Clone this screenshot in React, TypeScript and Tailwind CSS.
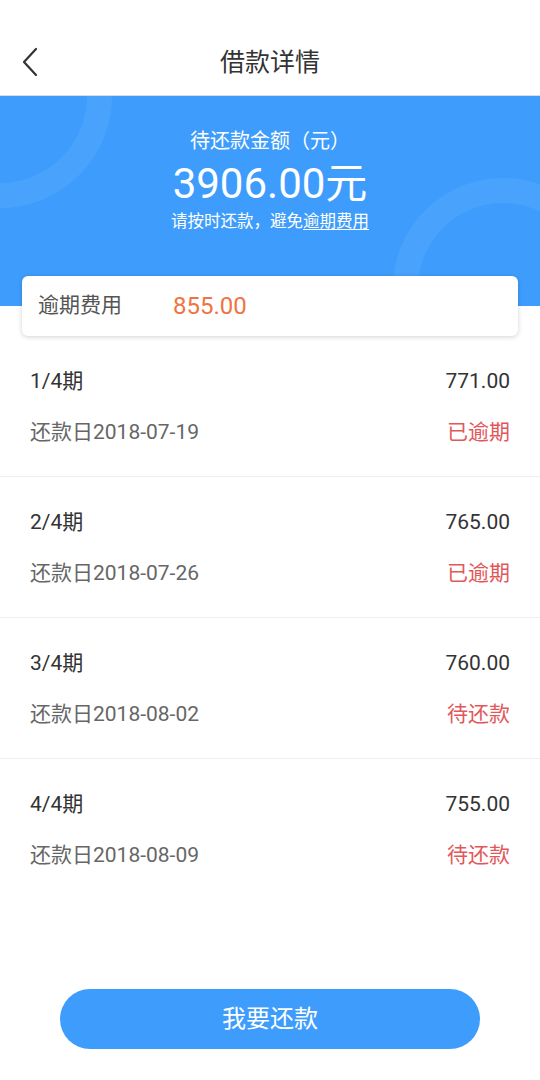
import React from 'react'

const periods = [
  { label: '1/4期', amount: '771.00', date: '还款日2018-07-19', status: '已逾期' },
  { label: '2/4期', amount: '765.00', date: '还款日2018-07-26', status: '已逾期' },
  { label: '3/4期', amount: '760.00', date: '还款日2018-08-02', status: '待还款' },
  { label: '4/4期', amount: '755.00', date: '还款日2018-08-09', status: '待还款' },
]

export default function App() {
  return (
    <div className="flex min-h-[1080px] w-[540px] flex-col bg-white font-['Roboto','Noto_Sans_CJK_SC',sans-serif]">
      {/* Header */}
      <header className="h-[96px] border-b border-[#dcdcdc] pt-[30px]">
        <div className="relative flex h-[65px] items-center justify-center">
          <button className="absolute left-[21px] top-[17px] flex h-[30px] w-[20px] items-center">
            <svg width="18" height="30" viewBox="0 0 18 30" fill="none">
              <polyline
                points="15,2 3,15 15,28"
                stroke="#333"
                strokeWidth="2.2"
                strokeLinecap="round"
                strokeLinejoin="round"
              />
            </svg>
          </button>
          <h1 className="text-[25px] leading-[32px] text-[#333]">借款详情</h1>
        </div>
      </header>

      {/* Summary band */}
      <section className="relative h-[210px] overflow-hidden bg-[#3e9dfc]">
        <div className="absolute left-[-112px] top-[-112px] h-[224px] w-[224px] rounded-full border-[25px] border-white/[0.06]" />
        <div className="absolute left-[393px] top-[82px] h-[220px] w-[220px] rounded-full border-[25px] border-white/[0.06]" />
        <div className="relative flex flex-col items-center pt-[31px] text-white">
          <p className="text-[20px] leading-[28px]">待还款金额（元）</p>
          <p className="mt-[4px] text-[42px] leading-[49px]">3906.00元</p>
          <p className="mt-[3px] text-[16.5px] leading-[22px]">
            请按时还款，避免<span className="underline underline-offset-2">逾期费用</span>
          </p>
        </div>
      </section>

      {/* Overdue fee card */}
      <div className="relative mx-[22px] -mt-[30px] flex h-[60px] items-center rounded-[6px] bg-white px-[16px] shadow-[0_1px_5px_rgba(0,0,0,0.18)]">
        <span className="w-[135px] text-[21px] text-[#555]">逾期费用</span>
        <span className="text-[24px] text-[#ee7442]">855.00</span>
      </div>

      {/* Installments */}
      <ul className="flex-1">
        {periods.map((p, i) => (
          <li
            key={p.label}
            className={`flex h-[141px] flex-col px-[30px] pt-[32px] ${i < periods.length - 1 ? 'border-b border-[#eeeeee]' : ''}`}
          >
            <div className="flex items-center justify-between text-[21px] leading-[26px] text-[#333]">
              <span>{p.label}</span>
              <span>{p.amount}</span>
            </div>
            <div className="mt-[25px] flex items-center justify-between text-[21px] leading-[26px]">
              <span className="text-[#666]">{p.date}</span>
              <span className="text-[#e2585a]">{p.status}</span>
            </div>
          </li>
        ))}
      </ul>

      {/* Bottom action */}
      <div className="flex justify-center pb-[31px]">
        <button className="h-[60px] w-[420px] rounded-full bg-[#3e9dfc] text-[24px] text-white">
          我要还款
        </button>
      </div>
    </div>
  )
}
